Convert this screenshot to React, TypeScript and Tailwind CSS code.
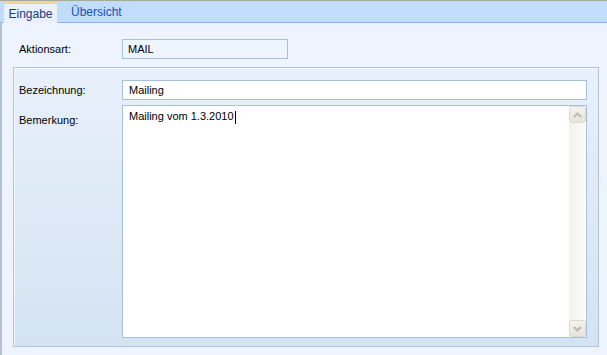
import React from 'react';

const font = { fontFamily: '"Liberation Sans", Arial, sans-serif' };

function Chevron({ up }: { up?: boolean }) {
  return (
    <svg width="9" height="6" viewBox="0 0 9 6" className="block">
      <path d={up ? 'M1 5 L4.5 1.5 L8 5' : 'M1 1 L4.5 4.5 L8 1'} fill="none" stroke="#bdb9ad" strokeWidth="2" />
    </svg>
  );
}

function Scrollbar() {
  return (
    <div className="w-[17px] h-full flex flex-col bg-gradient-to-r from-[#f3f2ec] to-[#fdfdfb]">
      <div className="h-[17px] flex items-center justify-center rounded-[3px] border border-[#ddd9cf] bg-gradient-to-b from-[#f4f3ee] to-[#e6e4dc]">
        <Chevron up />
      </div>
      <div className="flex-1" />
      <div className="h-[17px] flex items-center justify-center rounded-[3px] border border-[#ddd9cf] bg-gradient-to-b from-[#f4f3ee] to-[#e6e4dc]">
        <Chevron />
      </div>
    </div>
  );
}

export default function App() {
  return (
    <div style={font} className="w-[607px] h-[355px] flex flex-col border-t border-[#a9a8a0] bg-[#eef4fd] text-[11px] text-black overflow-hidden">
      {/* tab strip */}
      <div className="h-[22px] shrink-0 flex items-end pl-[3px] bg-[#c0dcff] border-b border-[#8ab2e6]">
        <div className="h-[21px] w-[55px] -mb-px flex items-center justify-center rounded-t-[2px] border-t-2 border-x border-[#f1d58c] bg-[#eaf1fc] text-[#1a3a86] text-[12px]">
          Eingabe
        </div>
        <div className="h-[21px] flex items-center pl-[13px] text-[#2050a8] text-[12px]">Übersicht</div>
      </div>

      {/* content */}
      <div className="flex-1 flex flex-col border-l-2 border-[#b2c2d8] pt-4 pb-[8px]">
        <div className="flex items-center h-5 pl-[17px]">
          <span className="w-[103px]">Aktionsart:</span>
          <div className="w-[166px] h-5 flex items-center pl-[5px] border border-[#a8c0e0] bg-[#eef4fd]">MAIL</div>
        </div>

        <div className="mt-2 ml-[11px] mr-2 flex-1 flex flex-col gap-[5px] pt-3 pb-2 pl-[5px] pr-[11px] border border-[#b3c3d8] bg-gradient-to-b from-[#e8f0fb] to-[#d4e3f2] shadow-[inset_1px_1px_0_#f4f8fd]">
          <div className="flex items-center h-5">
            <span className="w-[103px]">Bezeichnung:</span>
            <div className="flex-1 h-5 flex items-center pl-[6px] border border-[#a8c0e0] bg-white">Mailing</div>
          </div>
          <div className="flex flex-1">
            <span className="w-[103px] pt-[7px]">Bemerkung:</span>
            <div className="flex-1 flex border border-[#a8c0e0] bg-white">
              <div className="flex-1 pl-[6px] pt-[2px] leading-[16px]">
                Mailing vom 1.3.2010<span className="inline-block w-px h-[13px] bg-black align-middle ml-px" />
              </div>
              <Scrollbar />
            </div>
          </div>
        </div>
      </div>
    </div>
  );
}
